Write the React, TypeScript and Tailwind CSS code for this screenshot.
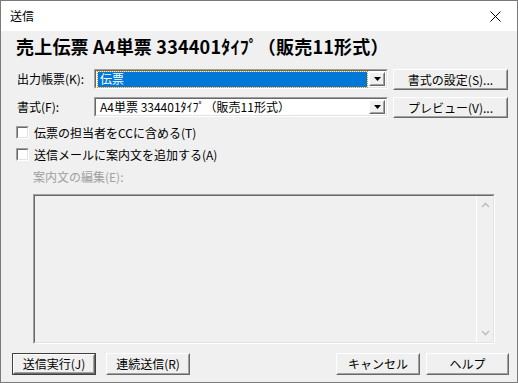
import React from "react";

const font = { fontFamily: '"Noto Sans CJK JP", "MS UI Gothic", sans-serif' };

function Sunken({ className = "", inner = "bg-white", children }: { className?: string; inner?: string; children?: React.ReactNode }) {
  return (
    <div className={`border-t border-l border-t-[#a0a0a0] border-l-[#a0a0a0] border-b border-r border-b-white border-r-white ${className}`}>
      <div className={`w-full h-full border-t border-l border-t-[#696969] border-l-[#696969] border-b border-r border-b-[#e3e3e3] border-r-[#e3e3e3] ${inner}`}>
        {children}
      </div>
    </div>
  );
}

function Raised({ className = "", children }: { className?: string; children?: React.ReactNode }) {
  return (
    <div className={`border-t border-l border-t-white border-l-white border-b border-r border-b-[#696969] border-r-[#696969] ${className}`}>
      <div className="w-full h-full border-t border-l border-t-[#f0f0f0] border-l-[#f0f0f0] border-b border-r border-b-[#a0a0a0] border-r-[#a0a0a0] bg-[#f0f0f0] flex items-center justify-center">
        {children}
      </div>
    </div>
  );
}

function DropBtn() {
  return (
    <Raised className="w-[16px] h-full shrink-0">
      <svg width="7" height="4" viewBox="0 0 7 4">
        <polygon points="0,0 7,0 3.5,4" fill="#000" />
      </svg>
    </Raised>
  );
}

function Combo({ children, selected }: { children: React.ReactNode; selected?: boolean }) {
  return (
    <Sunken className="w-[294px] h-[20px]">
      <div className="flex h-full items-stretch p-px">
        <div className="flex-1 flex items-center pl-px pr-[2px]">
          {selected ? (
            <div className="w-full h-[15px] bg-[#0078d7] outline-1 outline-dotted outline-[#ff8c00] text-white flex items-center pl-[2px] leading-none text-[12px]">
              {children}
            </div>
          ) : (
            <div className="w-full h-[15px] flex items-center pl-[2px] leading-none text-[12px] text-black">{children}</div>
          )}
        </div>
        <DropBtn />
      </div>
    </Sunken>
  );
}

function Btn({ label, className = "", isDefault }: { label: string; className?: string; isDefault?: boolean }) {
  const inner = (
    <Raised className="w-full h-full">
      <span className="text-[12px] leading-none text-black">{label}</span>
    </Raised>
  );
  return isDefault ? (
    <div className={`border border-[#404040] ${className}`}>{inner}</div>
  ) : (
    <div className={className}>{inner}</div>
  );
}

function Check({ label }: { label: string }) {
  return (
    <div className="flex items-center h-[13px]">
      <Sunken className="w-[13px] h-[13px] shrink-0" />
      <span className="ml-[5px] text-[12px] leading-none text-black">{label}</span>
    </div>
  );
}

export default function App() {
  return (
    <div style={font} className="w-[518px] h-[383px] border border-[#7a7a7a] bg-[#f0f0f0] flex flex-col overflow-hidden">
      <div className="h-[30px] bg-white flex items-center justify-between pl-[9px] pr-[16px] shrink-0">
        <span className="text-[12px] text-black leading-none">送信</span>
        <svg width="11" height="11" viewBox="0 0 11 11">
          <path d="M0.5 0.5 L10.5 10.5 M10.5 0.5 L0.5 10.5" stroke="#000" strokeWidth="1" />
        </svg>
      </div>

      <div className="pl-[15px] mt-[5px] h-[20px] flex items-center text-[18px] font-bold leading-none text-black tracking-[0.2px]">
        売上伝票 A4単票 334401ﾀｲﾌﾟ（販売11形式）
      </div>

      <div className="flex items-start pl-[16px] mt-[13px]">
        <div className="w-[77px] h-[20px] flex items-center text-[12px] leading-none text-black">出力帳票(K):</div>
        <Combo selected>伝票</Combo>
        <Btn label="書式の設定(S)..." className="ml-[5px] w-[115px] h-[21px]" />
      </div>

      <div className="flex items-start pl-[16px] mt-[7px]">
        <div className="w-[77px] h-[20px] flex items-center text-[12px] leading-none text-black">書式(F):</div>
        <Combo>A4単票 334401ﾀｲﾌﾟ（販売11形式）</Combo>
        <Btn label="プレビュー(V)..." className="ml-[5px] w-[115px] h-[21px]" />
      </div>

      <div className="pl-[15px] mt-[8px]">
        <Check label="伝票の担当者をCCに含める(T)" />
      </div>
      <div className="pl-[15px] mt-[9px]">
        <Check label="送信メールに案内文を追加する(A)" />
      </div>

      <div className="pl-[32px] mt-[9px] h-[14px] flex items-center text-[12px] leading-none text-[#a0a0a0]">案内文の編集(E):</div>

      <div className="pl-[32px] mt-[10px]">
        <Sunken className="w-[462px] h-[150px]" inner="bg-[#f0f0f0]">
          <div className="flex h-full justify-end">
            <div className="w-[17px] h-full border-l border-white flex flex-col justify-between items-center py-[6px]">
              <svg width="9" height="6" viewBox="0 0 9 6">
                <path d="M1 5 L4.5 1.5 L8 5" stroke="#c0c0c0" strokeWidth="1.6" fill="none" />
              </svg>
              <svg width="9" height="6" viewBox="0 0 9 6">
                <path d="M1 1 L4.5 4.5 L8 1" stroke="#c0c0c0" strokeWidth="1.6" fill="none" />
              </svg>
            </div>
          </div>
        </Sunken>
      </div>

      <div className="flex items-start mt-[9px] pl-[11px]">
        <Btn label="送信実行(J)" isDefault className="w-[84px] h-[22px]" />
        <Btn label="連続送信(R)" className="ml-[10px] w-[84px] h-[22px]" />
        <Btn label="キャンセル" className="ml-[146px] w-[84px] h-[22px]" />
        <Btn label="ヘルプ" className="ml-[6px] w-[83px] h-[22px]" />
      </div>
    </div>
  );
}
